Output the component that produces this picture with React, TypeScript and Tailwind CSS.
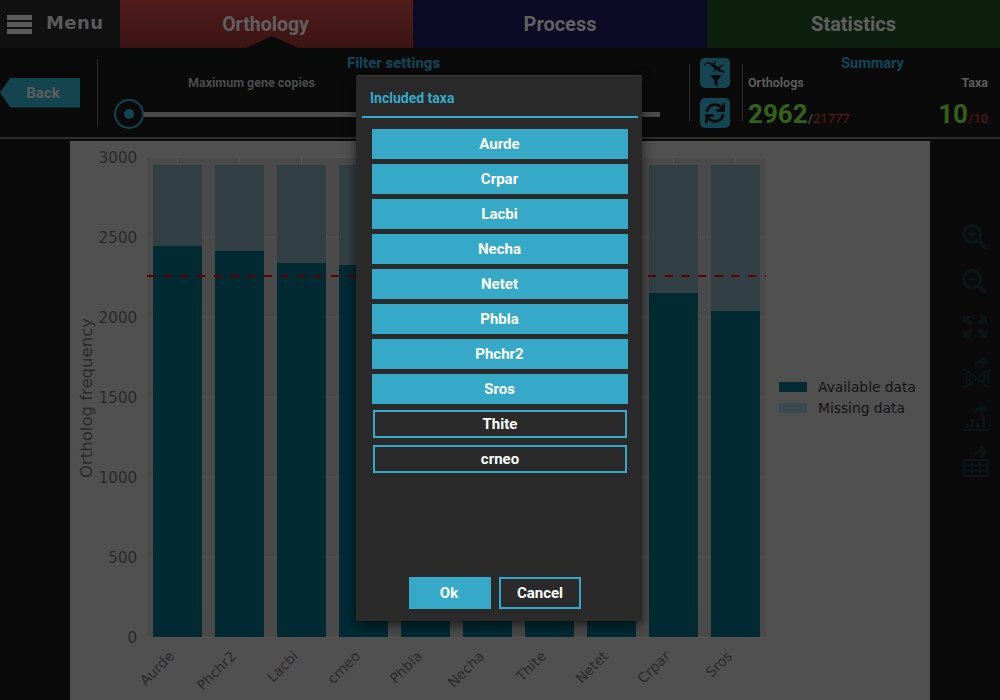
import { FaSearchMinus, FaSearchPlus, FaSync } from "react-icons/fa";

const BAR_BOTTOM = 637;
const PX_PER_UNIT = 0.16;
const MISSING_TOP = 165;

const bars = [
  { name: "Aurde", top: 246 },
  { name: "Phchr2", top: 251 },
  { name: "Lacbi", top: 263 },
  { name: "crneo", top: 265 },
  { name: "Phbla", top: 268 },
  { name: "Necha", top: 272 },
  { name: "Thite", top: 278 },
  { name: "Netet", top: 284 },
  { name: "Crpar", top: 293 },
  { name: "Sros", top: 311 },
];

const ticks = [0, 500, 1000, 1500, 2000, 2500, 3000];

const selected = ["Aurde", "Crpar", "Lacbi", "Necha", "Netet", "Phbla", "Phchr2", "Sros"];
const unselected = ["Thite", "crneo"];

function BarChart() {
  return (
    <svg viewBox="70 141 860 559" className="block h-[559px] w-[860px] bg-[#505050]">
      <rect x="147" y="158" width="619" height="479" fill="#4a4a4a" />
      {ticks.map((t) => (
        <line key={t} x1="147" x2="766" y1={BAR_BOTTOM - t * PX_PER_UNIT} y2={BAR_BOTTOM - t * PX_PER_UNIT} stroke="#555555" />
      ))}
      {bars.map((b, i) => (
        <line key={b.name} x1={177.5 + i * 62} x2={177.5 + i * 62} y1="158" y2="637" stroke="#555555" />
      ))}
      {bars.map((b, i) => (
        <g key={b.name}>
          <rect x={153 + i * 62} y={MISSING_TOP} width="49" height={b.top - MISSING_TOP} fill="#323f45" />
          <rect x={153 + i * 62} y={b.top} width="49" height={BAR_BOTTOM - b.top} fill="#012a33" />
        </g>
      ))}
      <line x1="147" x2="766" y1="276" y2="276" stroke="#5c0000" strokeWidth="2" strokeDasharray="8 8.7" />
      <g fontFamily="'DejaVu Sans', sans-serif" fill="#2b2b2b">
        {ticks.map((t) => (
          <text key={t} x="137" y={BAR_BOTTOM - t * PX_PER_UNIT + 6} textAnchor="end" fontSize="15">
            {t}
          </text>
        ))}
        {bars.map((b, i) => (
          <text
            key={b.name}
            x={175 + i * 62}
            y="657"
            textAnchor="end"
            fontSize="14"
            transform={`rotate(-45 ${175 + i * 62} 657)`}
          >
            {b.name}
          </text>
        ))}
        <text x="92" y="398" textAnchor="middle" fontSize="16.5" transform="rotate(-90 92 398)">
          Ortholog frequency
        </text>
      </g>
      <rect x="779" y="382" width="28" height="10" fill="#012a33" />
      <rect x="779" y="403" width="28" height="10" fill="#394a50" />
      <g fontFamily="'DejaVu Sans', sans-serif" fill="#141414" fontSize="13.8">
        <text x="818" y="392">Available data</text>
        <text x="818" y="413">Missing data</text>
      </g>
    </svg>
  );
}

function LizardFunnel() {
  return (
    <svg viewBox="0 0 30 30" className="h-[30px] w-[30px]">
      <g fill="none" stroke="#0a0a0a" strokeLinecap="round">
        <path d="M5 7c1.500-2.500 4-3 6-1l3 2.500" strokeWidth="1.400" />
        <path d="M12 6.500l8 6" strokeWidth="3.200" />
        <path d="M15 4l-1 3M23 7l-4 2.500M14 13l2.500-3M24 14l-4-2" strokeWidth="1.500" />
      </g>
      <path d="M10 17h12l-4.500 5.500V28l-3-1.500v-4z" fill="#0a0a0a" />
    </svg>
  );
}

function ShareArrow() {
  return <path d="M5 12c0-4 3-6.500 7-6.500V2l7 6-7 6V9.500c-3 0-5 .5-7 2.500z" fill="#0b1518" />;
}

function RailIcons() {
  const color = "#0b1518";
  return (
    <div className="flex w-[70px] flex-col pt-[73px] pl-[32px] text-[#0b1518]">
      <div className="flex h-[45px] items-center">
        <FaSearchPlus size={25} />
      </div>
      <div className="flex h-[45px] items-center">
        <FaSearchMinus size={25} />
      </div>
      <div className="flex h-[45px] items-center">
        <svg viewBox="0 0 26 24" className="h-6 w-[26px]" fill={color}>
          <path d="M1 1h8L6.500 3.500 11 8 8 11 3.500 6.500 1 9zM25 1v8l-2.500-2.500L18 11l-3-3 4.500-4.500L17 1zM1 23v-8l2.500 2.500L8 13l3 3-4.500 4.500L9 23zM25 23h-8l2.500-2.500L15 16l3-3 4.500 4.500L25 15z" />
        </svg>
      </div>
      <div className="flex h-[45px] items-center">
        <svg viewBox="0 0 30 34" className="h-[34px] w-[30px]" fill="none">
          <g transform="translate(8 -1)"><ShareArrow /></g>
          <path d="M1 15c9 0 19 17 28 17M1 32c9 0 19-17 28-17" stroke={color} strokeWidth="2" />
          <path d="M4 18v11M8 20v7M22 20v7M26 18v11" stroke={color} strokeWidth="2" />
        </svg>
      </div>
      <div className="flex h-[45px] items-center">
        <svg viewBox="0 0 28 30" className="h-[30px] w-7" fill={color}>
          <g transform="translate(7 -1)"><ShareArrow /></g>
          <path d="M1 27h26v2H1zM4 22h3v4H4zM9 17h3v9H9zM14 21h3v5h-3zM20 13h3v13h-3z" />
        </svg>
      </div>
      <div className="flex h-[45px] items-center">
        <svg viewBox="0 0 28 33" className="h-[33px] w-7" fill="none">
          <g transform="translate(7 -1)"><ShareArrow /></g>
          <path d="M2 15h24v16H2zM2 20.500h24M2 25.500h24M10 15v16M18 15v16" stroke={color} strokeWidth="2" />
        </svg>
      </div>
    </div>
  );
}

function TaxaDialog() {
  return (
    <div className="absolute top-[75px] left-[356px] flex h-[546px] w-[286px] flex-col rounded-[2px] border-t border-[#3a3a3a] bg-[#2a2a2a] pr-1 pl-[6px] font-['Roboto',sans-serif] shadow-[0_4px_12px_rgba(0,0,0,0.6)]">
      <h2 className="flex h-[42px] items-end border-b-2 border-[#36a9c9] pb-2 pl-2 text-sm font-bold text-[#36a9c9]">
        Included taxa
      </h2>
      <div className="flex flex-col gap-[5px] px-[10px] pt-[11px]">
        {selected.map((name) => (
          <button key={name} className="h-[30px] w-full bg-[#36a9c9] pr-px text-[15px] font-bold text-white">
            {name}
          </button>
        ))}
        {unselected.map((name) => (
          <div key={name} className="flex h-[30px] items-center justify-center px-px">
            <button className="h-[28px] w-full border-2 border-[#36a9c9] text-[15px] font-bold text-white">
              {name}
            </button>
          </div>
        ))}
      </div>
      <div className="mt-auto flex justify-center gap-2 pr-[10px] pb-3">
        <button className="h-8 w-[82px] bg-[#36a9c9] pr-[2px] text-[15px] font-bold text-white">Ok</button>
        <button className="h-8 w-[82px] border-2 border-[#36a9c9] text-[15px] font-bold text-white">Cancel</button>
      </div>
    </div>
  );
}

export default function App() {
  return (
    <div className="relative h-[700px] w-[1000px] overflow-hidden bg-[#0a0a0a] font-['Roboto',sans-serif]">
      <header className="relative flex h-12">
        <div className="flex w-[120px] items-center bg-[#111111] pl-[7px]">
          <div className="flex w-[25px] flex-col gap-[2px]">
            <span className="h-[5px] bg-[#5a5a5a]" />
            <span className="h-[5px] bg-[#5a5a5a]" />
            <span className="h-[5px] bg-[#5a5a5a]" />
          </div>
          <span className="ml-[14px] -translate-y-px font-['DejaVu_Sans',sans-serif] text-lg font-bold tracking-[0.4px] text-[#5a5a5a]">Menu</span>
        </div>
        <div className="flex w-[293px] items-center justify-center bg-gradient-to-b from-[#501c1c] to-[#3c1414] pt-px pr-[2px] text-[19.5px] font-bold text-[#606060]">
          Orthology
        </div>
        <div className="flex w-[294px] items-center justify-center bg-[#0c0a24] text-xl font-bold text-[#606060]">
          Process
        </div>
        <div className="flex w-[293px] items-center justify-center bg-[#0d1f0f] text-xl font-bold text-[#606060]">
          Statistics
        </div>
        <div className="absolute top-[36px] left-[246px] h-3 w-[52px] bg-[#0a0a0a] [clip-path:polygon(0_100%,50%_0,100%_100%)]" />
      </header>

      <section className="flex h-[91px] border-b-2 border-[#2c2c2c]">
        <div className="flex w-[97px] items-center">
          <div className="flex h-[30px] w-20 items-center justify-center bg-[#14444f] pt-px pl-[6px] text-[15px] font-bold text-[#5e5e5e] [clip-path:polygon(0_50%,13%_0,100%_0,100%_100%,13%_100%)]">
            Back
          </div>
        </div>
        <div className="my-[11px] w-px bg-[#2c2c2c]" />
        <div className="flex w-[591px] flex-col pt-[6px]">
          <h3 className="text-center text-[15px] leading-[18px] font-bold text-[#134657]">Filter settings</h3>
          <p className="pt-[3px] pl-[90px] text-[12.5px] leading-[16px] font-bold text-[#4c4c4c]">Maximum gene copies</p>
          <div className="flex items-center pt-[8px] pl-4">
            <div className="flex h-[30px] w-[30px] items-center justify-center rounded-full border-2 border-[#14444f]">
              <div className="h-[10px] w-[10px] rounded-full bg-[#14444f]" />
            </div>
            <div className="h-[5px] w-[516px] bg-[#4a4a4a]" />
          </div>
        </div>
        <div className="my-4 w-px bg-[#2c2c2c]" />
        <div className="flex w-[52px] flex-col items-center gap-[10px] pt-[10px] pr-[2px]">
          <div className="h-[30px] w-[30px] rounded-[5px] bg-[#144552]">
            <LizardFunnel />
          </div>
          <div className="flex h-[30px] w-[30px] items-center justify-center rounded-[5px] bg-[#144552] text-[#0a0a0a]">
            <FaSync size={20} />
          </div>
        </div>
        <div className="my-4 w-px bg-[#2c2c2c]" />
        <div className="flex w-[257px] flex-col pt-[7px] pr-3 pl-[5px]">
          <h3 className="pl-[9px] text-center text-[14.5px] leading-[18px] font-bold text-[#134657]">Summary</h3>
          <div className="flex justify-between pt-[2px] text-[12.5px] leading-[16px] font-bold text-[#5c5c5c]">
            <span>Orthologs</span>
            <span>Taxa</span>
          </div>
          <div className="flex items-baseline justify-between pt-[7px] leading-[32px] font-bold">
            <span>
              <span className="text-[26px] text-[#35601a]">2962</span>
              <span className="text-[13px] font-normal text-[#5c5c5c]">/</span>
              <span className="text-[13px] font-normal text-[#5e1b1b]">21777</span>
            </span>
            <span>
              <span className="text-[26px] text-[#35601a]">10</span>
              <span className="text-[13px] font-normal text-[#5e1b1b]">/10</span>
            </span>
          </div>
        </div>
      </section>

      <main className="flex pt-[2px]">
        <div className="w-[70px]" />
        <BarChart />
        <RailIcons />
      </main>

      <TaxaDialog />
    </div>
  );
}
